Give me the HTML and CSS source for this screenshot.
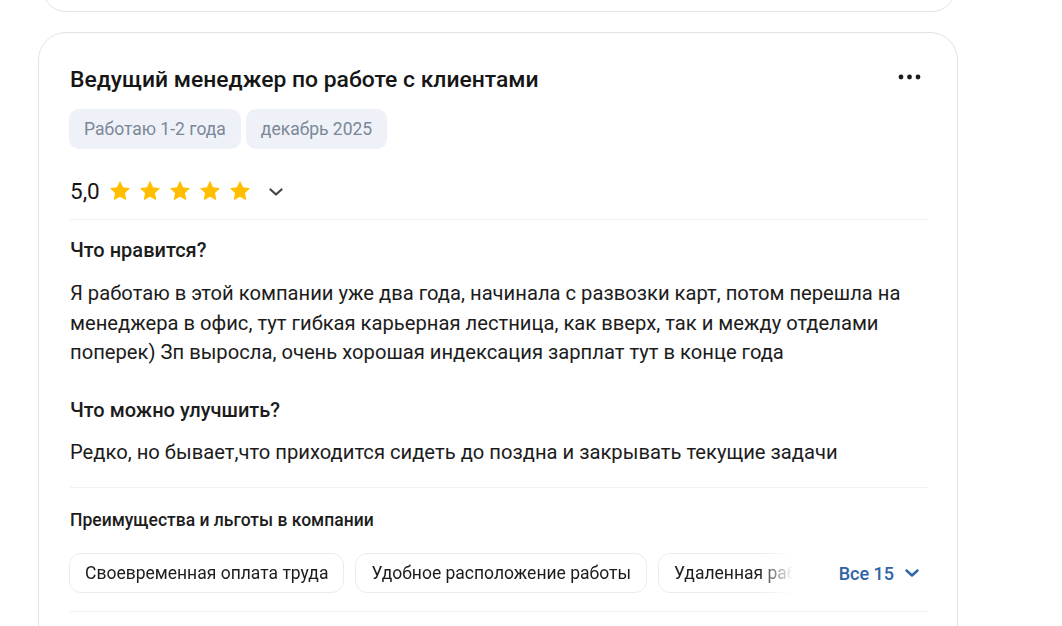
FILE: index.html
```html
<!DOCTYPE html>
<html lang="ru">
<head>
<meta charset="utf-8">
<link rel="stylesheet" href="styles.css">
</head>
<body>
<div class="prev-card"></div>
<article class="card">
  <header class="head">
    <h2 class="title">Ведущий менеджер по работе с клиентами</h2>
    <svg class="dots" width="24" height="8" viewBox="0 0 24 8"><circle cx="3" cy="4" r="2.4"/><circle cx="11.5" cy="4" r="2.4"/><circle cx="20" cy="4" r="2.4"/></svg>
  </header>
  <div class="tags">
    <span class="tag">Работаю 1-2 года</span>
    <span class="tag">декабрь 2025</span>
  </div>
  <div class="rating">
    <span class="score">5,0</span>
    <span class="stars">
      <svg class="star" viewBox="0 0 24 24"><path d="M12 1.8l3.1 6.5 7 .9-5.1 4.9 1.3 7.1L12 17.8l-6.3 3.4 1.3-7.1L1.9 9.2l7-.9z"/></svg>
      <svg class="star" viewBox="0 0 24 24"><path d="M12 1.8l3.1 6.5 7 .9-5.1 4.9 1.3 7.1L12 17.8l-6.3 3.4 1.3-7.1L1.9 9.2l7-.9z"/></svg>
      <svg class="star" viewBox="0 0 24 24"><path d="M12 1.8l3.1 6.5 7 .9-5.1 4.9 1.3 7.1L12 17.8l-6.3 3.4 1.3-7.1L1.9 9.2l7-.9z"/></svg>
      <svg class="star" viewBox="0 0 24 24"><path d="M12 1.8l3.1 6.5 7 .9-5.1 4.9 1.3 7.1L12 17.8l-6.3 3.4 1.3-7.1L1.9 9.2l7-.9z"/></svg>
      <svg class="star" viewBox="0 0 24 24"><path d="M12 1.8l3.1 6.5 7 .9-5.1 4.9 1.3 7.1L12 17.8l-6.3 3.4 1.3-7.1L1.9 9.2l7-.9z"/></svg>
    </span>
    <svg class="chev" width="14" height="8" viewBox="0 0 14 8"><path d="M1.5 1.5L7 6.5l5.5-5" fill="none" stroke="#444" stroke-width="2.2" stroke-linecap="round" stroke-linejoin="round"/></svg>
  </div>
  <div class="divider"></div>
  <section class="block">
    <h3 class="q">Что нравится?</h3>
    <p class="text">Я работаю в этой компании уже два года, начинала с развозки карт, потом перешла на менеджера в офис, тут гибкая карьерная лестница, как вверх, так и между отделами поперек) Зп выросла, очень хорошая индексация зарплат тут в конце года</p>
  </section>
  <section class="block block-2">
    <h3 class="q">Что можно улучшить?</h3>
    <p class="text">Редко, но бывает,что приходится сидеть до поздна и закрывать текущие задачи</p>
  </section>
  <div class="divider divider-2"></div>
  <h4 class="perks-title">Преимущества и льготы в компании</h4>
  <div class="perks">
    <div class="chips">
      <span class="chip">Своевременная оплата труда</span>
      <span class="chip">Удобное расположение работы</span>
      <span class="chip">Удаленная работа</span>
    </div>
    <button class="more">Все 15<svg width="14" height="8" viewBox="0 0 14 8"><path d="M1.5 1.5L7 6.5l5.5-5" fill="none" stroke="#2f63a8" stroke-width="2.4" stroke-linecap="round" stroke-linejoin="round"/></svg></button>
  </div>
  <div class="divider divider-3"></div>
</article>
</body>
</html>
```
FILE: styles.css
```css
* { box-sizing: border-box; }
html, body { margin: 0; padding: 0; background: #fff; overflow: hidden; }
body {
  font-family: Roboto, "Noto Sans", "Liberation Sans", sans-serif;
  color: #1c1c1c;
  width: 1062px;
  height: 626px;
}
.prev-card {
  margin: -40px 0 0 42px;
  width: 914px;
  height: 52px;
  border: 1px solid #dfe3ea;
  border-radius: 24px;
}
.card {
  margin: 20px 0 0 38px;
  width: 920px;
  height: 700px;
  border: 1px solid #dfe3ea;
  border-radius: 28px;
  padding: 33px 29px 0 31px;
}
.head {
  display: flex;
  justify-content: space-between;
  align-items: flex-start;
}
.title {
  margin: 0;
  font-size: 22.9px;
  line-height: 28px;
  font-weight: 500;
  color: #161616;
}
.dots { fill: #1c1c1c; margin: 7px 6px 0 0; }
.tags { display: flex; gap: 5px; margin-top: 15px; }
.tag {
  height: 40px;
  display: inline-flex;
  align-items: center;
  padding: 0 15px 0 15px;
  margin-left: -1px;
  background: #eef1f7;
  border-radius: 10px;
  color: #7c8797;
  font-size: 17.5px;
}
.tag + .tag { margin-left: 0; }
.rating {
  display: flex;
  align-items: center;
  height: 32px;
  margin-top: 26px;
}
.score { font-size: 22.5px; line-height: 32px; color: #161616; }
.stars { display: flex; gap: 6px; margin-left: 8px; }
.star { width: 24px; height: 24px; fill: #ffbf00; }
.chev { margin-left: 17px; margin-top: 1px; }
.divider { height: 1px; background: #eff1f4; margin-top: 12px; }
.block { margin-top: 18px; }
.q {
  margin: 0;
  font-size: 20px;
  line-height: 24px;
  font-weight: 500;
  color: #1c1c1c;
}
.text {
  margin: 17px 0 0;
  font-size: 20.2px;
  line-height: 29.5px;
  color: #1c1c1c;
}
.block-2 { margin-top: 30px; }
.block-2 .text { margin-top: 16px; }
.divider-2 { margin-top: 20px; }
.perks-title {
  margin: 21px 0 0;
  font-size: 17.5px;
  line-height: 22px;
  font-weight: 500;
  color: #1c1c1c;
}
.perks {
  display: flex;
  align-items: center;
  margin-top: 22px;
}
.chips {
  flex: 1;
  display: flex;
  gap: 11px;
  overflow: hidden;
  margin-left: -1px;
  margin-right: 44px;
  -webkit-mask-image: linear-gradient(to right, #000 calc(100% - 36px), transparent calc(100% - 2px));
  mask-image: linear-gradient(to right, #000 calc(100% - 36px), transparent calc(100% - 2px));
}
.chip {
  flex: none;
  height: 40px;
  display: inline-flex;
  align-items: center;
  padding: 0 15px;
  border: 1px solid #e8ebf0;
  border-radius: 12px;
  font-size: 17.5px;
  color: #1c1c1c;
  white-space: nowrap;
}
.more {
  display: inline-flex;
  align-items: center;
  gap: 11px;
  border: 0;
  background: none;
  padding: 0 9px 0 0;
  font-family: inherit;
  font-size: 18px;
  font-weight: 500;
  color: #2f63a8;
}
.divider-3 { margin-top: 18px; }
```
